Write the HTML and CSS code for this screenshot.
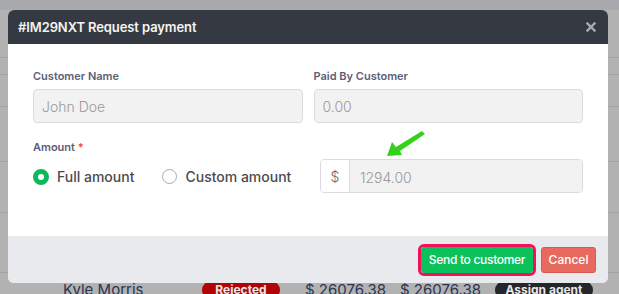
FILE: index.html
```html
<!DOCTYPE html>
<html lang="en">
<head>
  <meta charset="UTF-8">
  <meta name="viewport" content="width=device-width, initial-scale=1.0">
  <title>Request payment</title>
  <link rel="stylesheet" href="styles.css">
</head>
<body>
  <div class="topbar"></div>

  <div class="table">
    <div class="row row-1"></div>
    <div class="row row-2"></div>
    <div class="row row-3"></div>
    <div class="row row-4"></div>
    <div class="row row-5"></div>
    <div class="row row-6"></div>
    <div class="row row-last">
      <span class="cell-name">Kyle Morris</span>
      <span class="cell"><span class="badge badge-rejected">Rejected</span></span>
      <span class="cell">$ 26076.38</span>
      <span class="cell">$ 26076.38</span>
      <span class="cell"><span class="badge badge-agent">Assign agent</span></span>
    </div>
  </div>

  <div class="modal">
    <div class="modal-header">
      <h3>#IM29NXT Request payment</h3>
      <button class="modal-close" aria-label="Close">
        <svg width="10" height="10" viewBox="0 0 10 10">
          <path d="M1.5 1.5 L8.5 8.5 M8.5 1.5 L1.5 8.5" stroke="#a9abb0" stroke-width="2.4" stroke-linecap="square"/>
        </svg>
      </button>
    </div>

    <div class="modal-body">
      <div class="form-grid">
        <div class="form-group">
          <label>Customer Name</label>
          <input type="text" class="form-control" value="John Doe" readonly>
        </div>
        <div class="form-group">
          <label>Paid By Customer</label>
          <input type="text" class="form-control" value="0.00" readonly>
        </div>
      </div>

      <div class="amount-row">
        <div class="form-group">
          <label>Amount <span class="required">*</span></label>
          <div class="radios">
            <span class="radio checked"><span class="radio-dot"></span>Full amount</span>
            <span class="radio"><span class="radio-dot"></span>Custom amount</span>
          </div>
        </div>
        <div class="input-group">
          <span class="addon">$</span>
          <input type="text" class="form-control plain" value="1294.00" readonly>
        </div>
      </div>

      <svg class="pointer" width="44" height="30" viewBox="0 0 44 30">
        <path d="M37 1 L40 4 L15 21 L17 25 L2 26 L7 12 L11 17 Z" fill="#35d21c"/>
      </svg>
    </div>

    <div class="modal-footer">
      <button class="btn-send">Send to customer</button>
      <button class="btn-cancel">Cancel</button>
    </div>
  </div>
</body>
</html>
```

FILE: styles.css
```css
/* Reset */
* {
  margin: 0;
  padding: 0;
  box-sizing: border-box;
}

body {
  font-family: 'Inter', 'Noto Sans', sans-serif;
  background: #b2b2b2;
  color: #333;
  height: 294px;
  overflow: hidden;
  position: relative;
}

/* Page behind the overlay */
.topbar {
  height: 10px;
  background: #a8a9ac;
}

.row {
  border-bottom: 1px solid #a2a2a2;
}

.row-1 { height: 48px; }
.row-2 { height: 17px; }
.row-3 { height: 32px; }
.row-4 { height: 55px; }
.row-5 { height: 51px; }
.row-6 { height: 60px; }

.row-last {
  display: grid;
  grid-template-columns: 139px 103px 95px 95px auto;
  align-items: center;
  padding: 7px 0 0 63px;
  font-size: 15px;
  line-height: 18px;
  color: #2b3550;
}

.badge {
  display: inline-block;
  width: 78px;
  border-radius: 10px;
  color: #e8e8e8;
  font-size: 12px;
  font-weight: 700;
  text-align: center;
  line-height: 18px;
}

.badge-rejected {
  background: #b00406;
}

.badge-agent {
  width: 98px;
  background: #24262b;
}

/* Modal */
.modal {
  position: absolute;
  top: 10px;
  left: 8px;
  width: 600px;
  border-radius: 6px;
  overflow: hidden;
  background: white;
}

.modal-header {
  height: 34px;
  background: #353a42;
  display: flex;
  align-items: center;
  justify-content: space-between;
  padding: 0 12px 0 10px;
}

.modal-header h3 {
  color: #f4f4f4;
  font-size: 13px;
  font-weight: 600;
  letter-spacing: -0.1px;
}

.modal-close {
  background: none;
  border: none;
  display: flex;
}

.modal-body {
  position: relative;
  height: 192px;
  padding: 25px 25px 0 25px;
}

.form-grid {
  display: grid;
  grid-template-columns: 1fr 1fr;
  gap: 11px;
}

.form-group label {
  display: block;
  font-size: 11px;
  line-height: 14px;
  font-weight: 600;
  color: #5c6075;
  margin-bottom: 6px;
}

.required {
  color: #e4513f;
}

.form-control {
  width: 100%;
  height: 34px;
  padding: 0 8px;
  background: #f2f2f3;
  border: 1px solid #dadbe3;
  border-radius: 4px;
  font-family: inherit;
  font-size: 14px;
  font-weight: 300;
  color: #999;
  outline: none;
}

.amount-row {
  display: flex;
  align-items: flex-end;
  justify-content: space-between;
  margin-top: 17px;
}

.radios {
  display: flex;
  align-items: center;
  gap: 28px;
  height: 33px;
}

.radio {
  display: flex;
  align-items: center;
  gap: 8px;
  font-size: 14px;
  font-weight: 500;
  color: #4a4a4c;
}

.radio-dot {
  width: 15px;
  height: 15px;
  border-radius: 50%;
  border: 1px solid #a9abb3;
  background: white;
}

.radio.checked .radio-dot {
  width: 16px;
  height: 16px;
  border: 5px solid #0cb95a;
}

.input-group {
  display: flex;
  width: 263px;
  height: 34px;
  border: 1px solid #dadbe3;
  border-radius: 4px;
  overflow: hidden;
}

.addon {
  width: 29px;
  flex-shrink: 0;
  display: flex;
  align-items: center;
  justify-content: center;
  background: white;
  border-right: 1px solid #dadbe3;
  font-size: 14px;
  font-weight: 300;
  color: #666;
}

.form-control.plain {
  border: none;
  border-radius: 0;
  padding: 0 10px;
}

/* annotation arrow */
.pointer {
  position: absolute;
  left: 377px;
  top: 86px;
}

/* Footer */
.modal-footer {
  height: 47px;
  background: #e9eaee;
  display: flex;
  align-items: center;
  justify-content: flex-end;
  gap: 8px;
  padding-right: 12px;
}

.modal-footer button {
  height: 26px;
  border-radius: 3px;
  font-family: inherit;
  font-size: 12px;
  font-weight: 500;
  color: white;
}

.btn-send {
  width: 112px;
  background: #0bc15c;
  border: 1px solid #0bc15c;
  outline: 3px solid #f2115b;
  letter-spacing: -0.3px;
}

.btn-cancel {
  width: 55px;
  background: #e8695e;
  border: 1px solid #d9584f;
}
```
